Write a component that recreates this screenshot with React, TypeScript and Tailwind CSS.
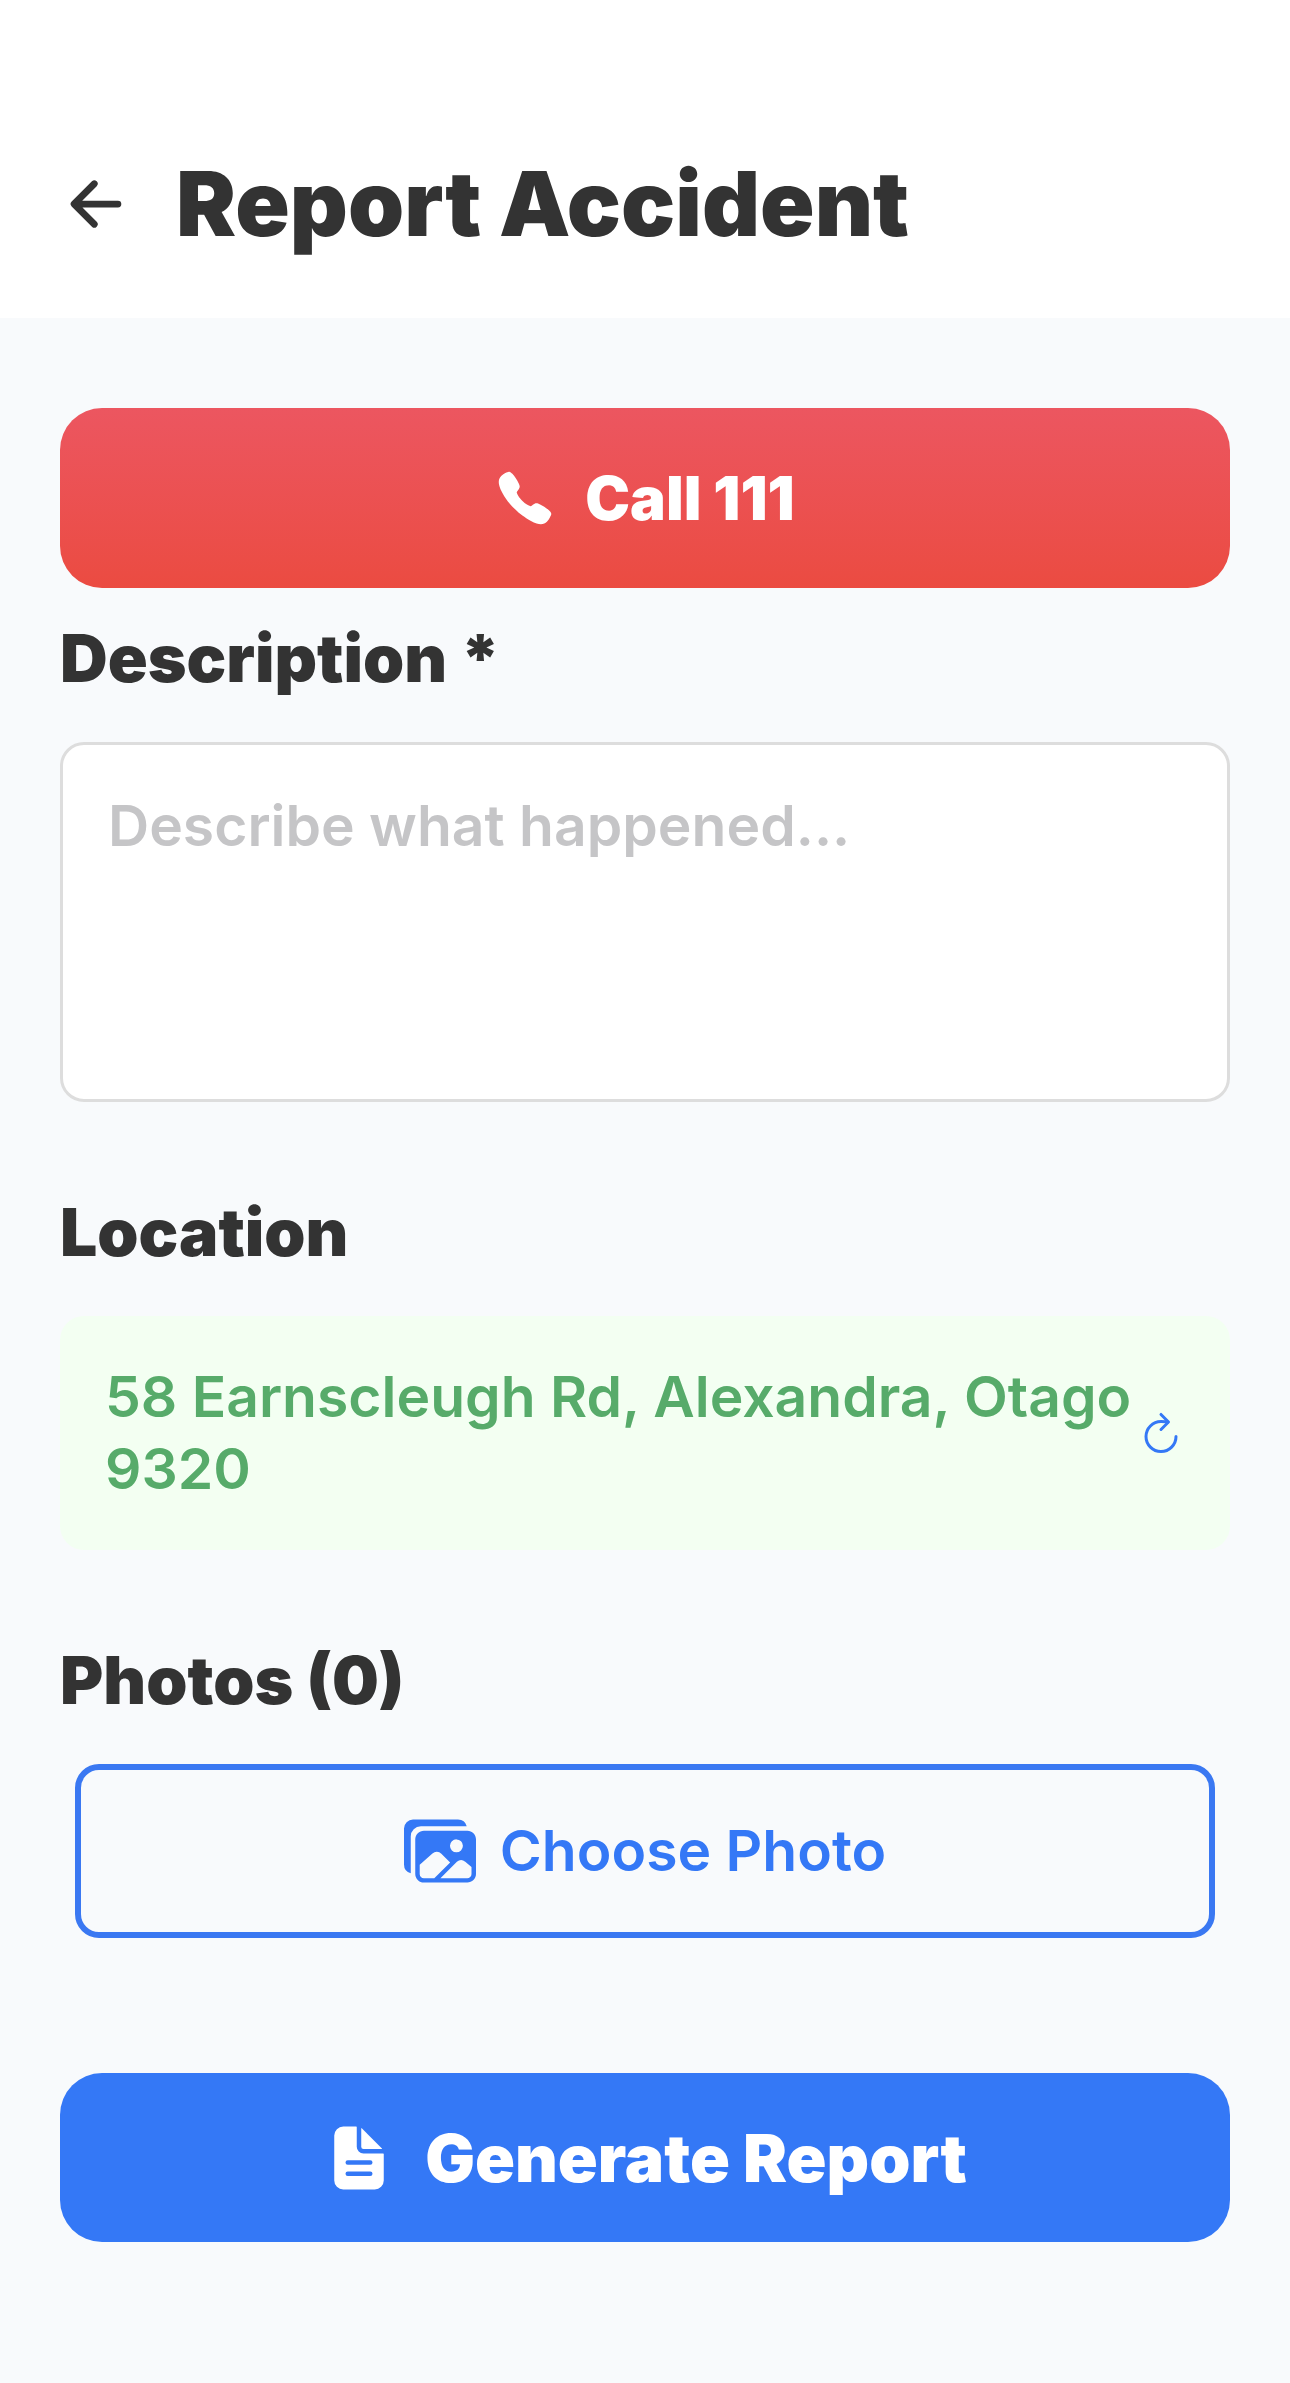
import { useState } from "react";
import type { ReactNode } from "react";
import { IoArrowBack, IoCall, IoDocumentText, IoImages, IoRefresh } from "react-icons/io5";

const address = "58 Earnscleugh Rd, Alexandra, Otago 9320";

function SectionTitle({ children }: { children: ReactNode }) {
  return <h2 className="text-[66px] leading-20 font-black text-[#333333]">{children}</h2>;
}

export default function App() {
  const [description, setDescription] = useState("");
  const [photos] = useState<string[]>([]);

  return (
    <div className="min-h-screen bg-[#f8fafc] font-['Inter',sans-serif]">
      <header className="flex items-center gap-11 bg-white px-15 pt-36 pb-[54px]">
        <button type="button" aria-label="Back" className="text-[#333333]">
          <IoArrowBack className="size-[72px]" />
        </button>
        <h1 className="text-[90px] leading-30 font-black text-[#333333]">Report Accident</h1>
      </header>

      <main className="flex flex-col px-15 pt-[90px] pb-20">
        <a
          href="tel:111"
          className="flex h-45 items-center justify-center gap-[30px] rounded-[42px] bg-linear-to-b from-[#ec5660] to-[#eb4b41] text-[60px] leading-[72px] font-black text-white"
        >
          <IoCall className="size-15" />
          Call 111
        </a>

        <section className="mt-[30px] flex flex-col gap-11">
          <SectionTitle>
            <label htmlFor="description">Description *</label>
          </SectionTitle>
          <textarea
            id="description"
            value={description}
            onChange={(event) => setDescription(event.target.value)}
            placeholder="Describe what happened..."
            className="h-90 w-full resize-none rounded-3xl border-3 border-[#dddddd] bg-white p-[45px] text-[57px] leading-[72px] font-semibold text-[#333333] outline-none placeholder:text-[#c5c5c7]"
          />
        </section>

        <section className="mt-[90px] flex flex-col gap-11">
          <SectionTitle>Location</SectionTitle>
          <div className="flex items-center rounded-3xl bg-[#f3fff2] px-[45px] py-[45px]">
            <p className="flex-1 text-[57px] leading-[72px] font-semibold text-[#57ab6a]">{address}</p>
            <button type="button" aria-label="Refresh location" className="text-[#3478f6]">
              <IoRefresh className="size-12" />
            </button>
          </div>
        </section>

        <section className="mt-[90px] flex flex-col gap-11">
          <SectionTitle>Photos ({photos.length})</SectionTitle>
          <button
            type="button"
            className="mx-[15px] flex h-[174px] items-center justify-center gap-6 rounded-3xl border-6 border-[#3a78f2] text-[57px] leading-[72px] font-semibold text-[#3478f6]"
          >
            <IoImages className="size-[72px]" />
            Choose Photo
          </button>
        </section>

        <button
          type="button"
          className="mt-[135px] flex h-[169px] items-center justify-center gap-[30px] rounded-[42px] bg-[#3478f6] text-[66px] leading-20 font-black text-white"
        >
          <IoDocumentText className="size-[72px]" />
          Generate Report
        </button>
      </main>
    </div>
  );
}
